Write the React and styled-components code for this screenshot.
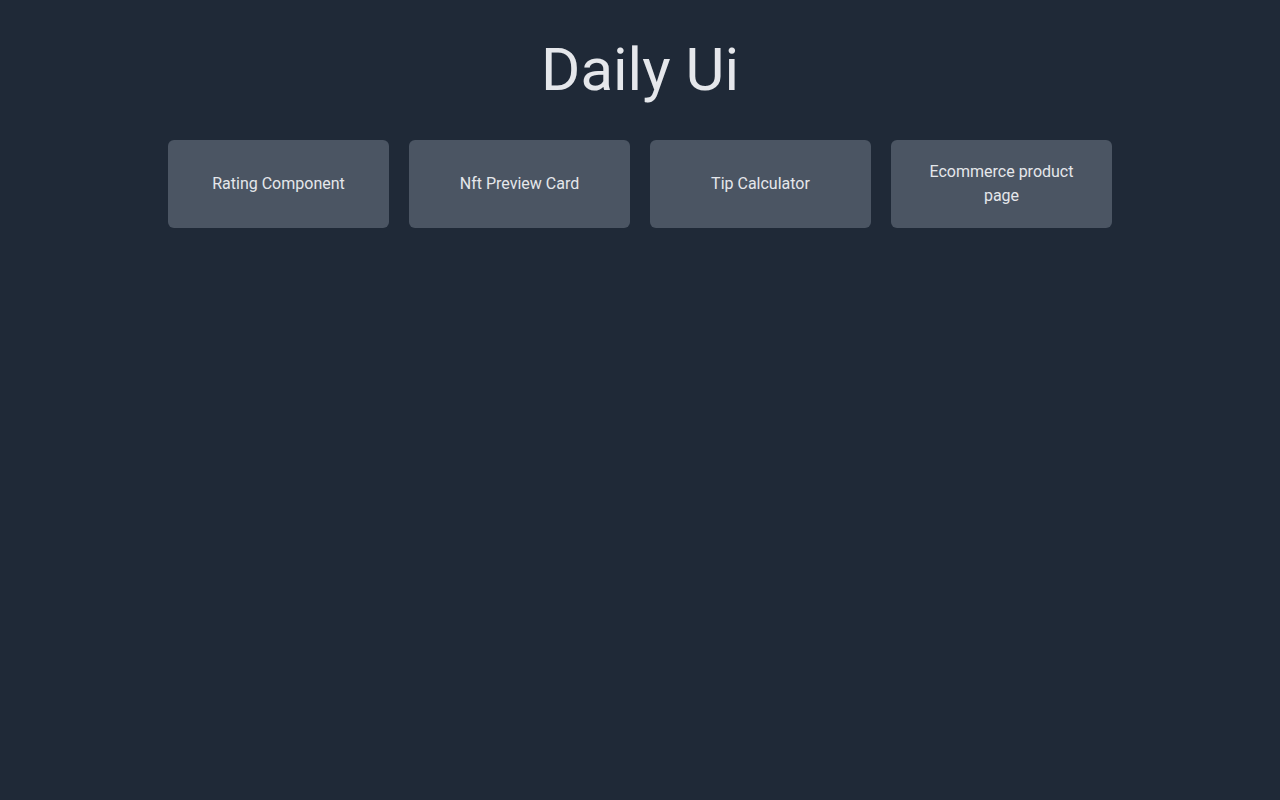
import React from "react";
import styled, { createGlobalStyle } from "styled-components";

const GlobalStyle = createGlobalStyle`
  html, body {
    margin: 0;
    padding: 0;
    background: #1f2937;
    font-family: Roboto, "Noto Sans", sans-serif;
  }
  #root {
    min-height: 100vh;
  }
`;

const Page = styled.main`
  min-height: 100vh;
  background: #1f2937;
  color: #e5e7eb;
  display: flex;
  flex-direction: column;
  align-items: center;
`;

const Title = styled.h1`
  margin: 40px 0 0;
  font-size: 60px;
  line-height: 60px;
  font-weight: 400;
  color: #e5e7eb;
`;

const Grid = styled.div`
  margin-top: 40px;
  width: 944px;
  display: grid;
  grid-template-columns: repeat(4, 1fr);
  gap: 20px;
`;

const Card = styled.a`
  display: flex;
  align-items: center;
  justify-content: center;
  text-align: center;
  min-height: 88px;
  box-sizing: border-box;
  padding: 20px 32px;
  background: #4b5563;
  border-radius: 6px;
  color: #e5e7eb;
  font-size: 16px;
  line-height: 24px;
  text-decoration: none;
  cursor: pointer;
`;

const projects = [
  "Rating Component",
  "Nft Preview Card",
  "Tip Calculator",
  "Ecommerce product page",
];

export default function App() {
  return (
    <>
      <GlobalStyle />
      <Page>
        <Title>Daily Ui</Title>
        <Grid>
          {projects.map((p) => (
            <Card key={p}>{p}</Card>
          ))}
        </Grid>
      </Page>
    </>
  );
}
